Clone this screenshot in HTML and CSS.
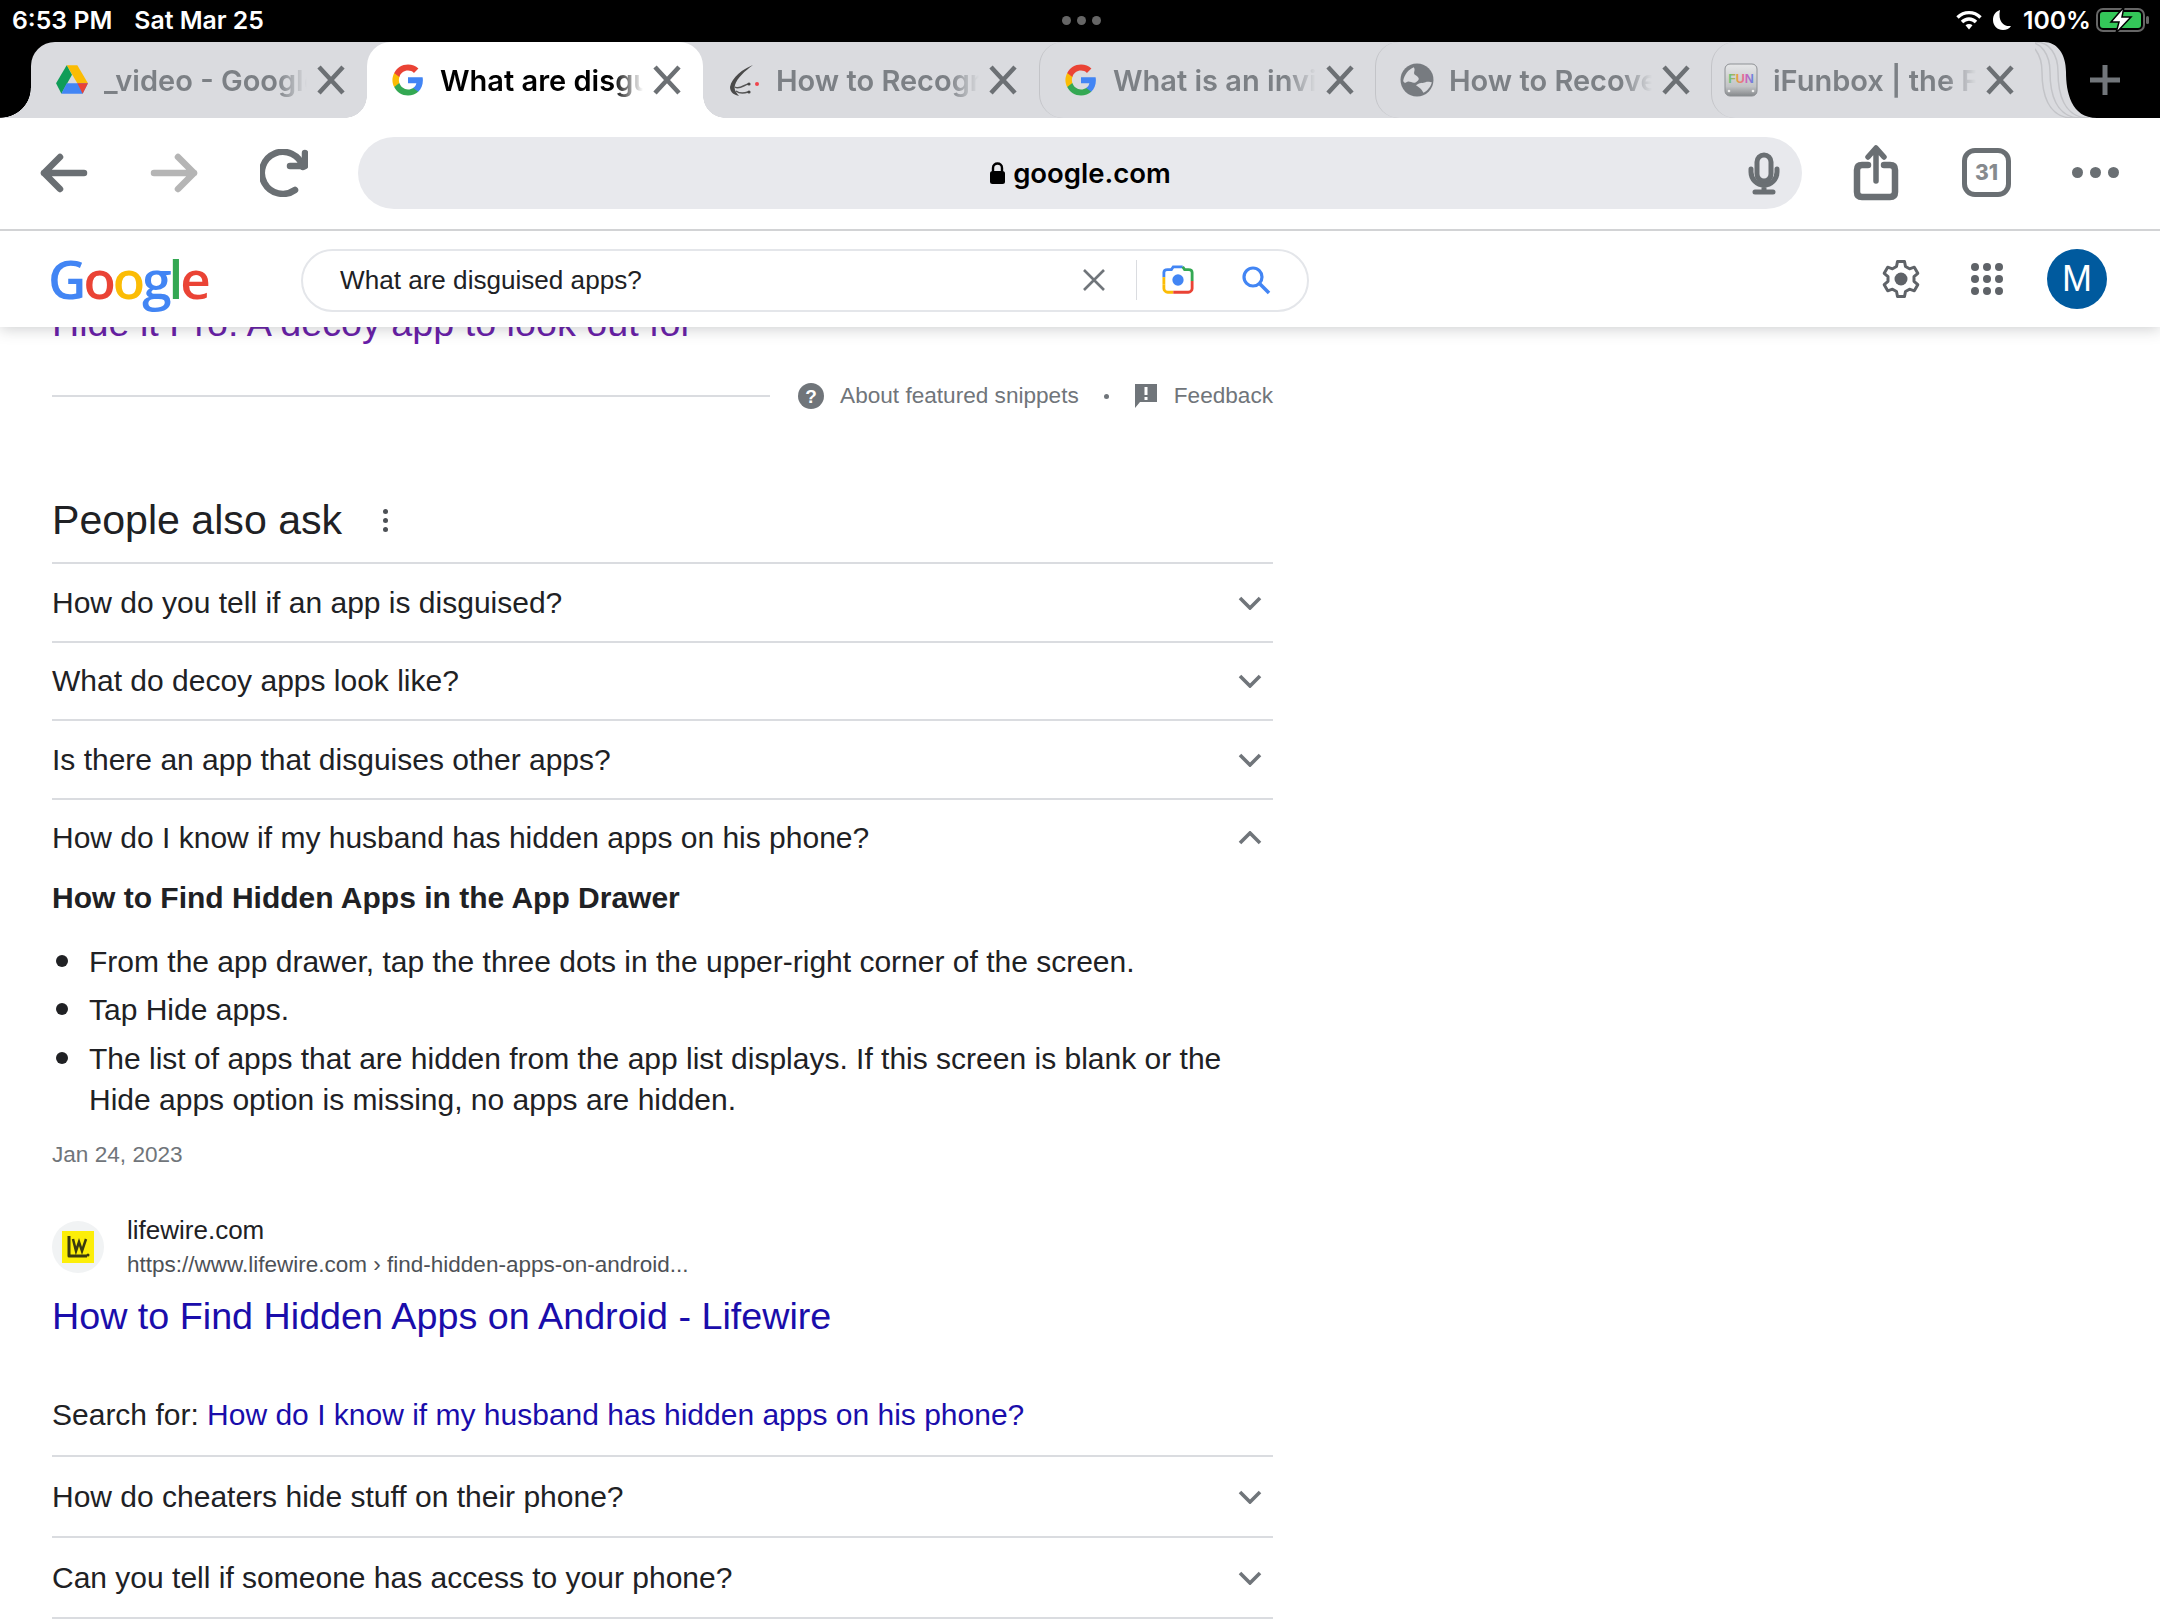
FILE: index.html
```html
<!DOCTYPE html>
<html>
<head>
    <meta charset="utf-8">
    <title>What are disguised apps? - Google Search</title>
    <link rel="stylesheet" href="styles.css">
</head>
<body>
<div id="chrome">
    <div class="statusbar">
        <div class="status-time"><span>6:53 PM</span><span>Sat Mar 25</span></div>
        <div class="status-dots"><i></i><i></i><i></i></div>
        <div class="status-right">
            <svg class="wifi" width="26" height="20" viewBox="0 0 26 20"><path d="M1.500 7.500C8 1 18 1 24.500 7.500" fill="none" stroke="#fff" stroke-width="3.400"/><path d="M6 12C10 8 16 8 20 12" fill="none" stroke="#fff" stroke-width="3.400"/><path d="M9.500 15.200C11.500 13.600 14.500 13.600 16.500 15.200L13 19.500Z" fill="#fff"/></svg>
            <svg class="moon" width="20" height="22" viewBox="0 0 20 22"><path d="M8 1C3.500 2.500 1 6 1 11C1 17 5.500 21 11 21C14.500 21 17.500 19.500 19 17C12.500 18 5.500 13 8 1Z" fill="#fff"/></svg>
            <span class="status-pct">100%</span>
            <svg width="54" height="26" viewBox="0 0 54 26"><rect x="1" y="2" width="47" height="22" rx="6" fill="none" stroke="#666" stroke-width="2"/><rect x="4" y="5" width="41" height="16" rx="3" fill="#34c759"/><rect x="50" y="9" width="3" height="8" rx="1.500" fill="#666"/><path d="M28 0L15 15H23L20 26L35 10H26Z" fill="#fff" stroke="#000" stroke-width="1.500"/></svg>
        </div>
    </div>

    <div class="tabstrip">
        <div class="tabs">
            <div class="tab">
                <svg class="favicon" viewBox="0 0 32 30"><path d="M11 1H21L31 18H21Z" fill="#fbbc04"/><path d="M11 1L1 18L6 28L16 10Z" fill="#0f9d58"/><path d="M6 28H26L31 18H11Z" fill="#4285f4"/><path d="M26 28L31 18H21Z" fill="#ea4335"/></svg>
                <span class="tab-title">_video - Google</span>
                <svg class="tab-close" viewBox="0 0 30 30"><path d="M3 2L27 28M27 2L3 28"/></svg>
            </div>
            <div class="tab active">
                <svg class="favicon" viewBox="0 0 48 48"><path fill="#4285f4" d="M45 24.500c0-1.600-.1-3.100-.4-4.500H24v8.500h11.800c-.5 2.700-2.100 5-4.400 6.600v5.500h7.100C42.600 36.800 45 31.200 45 24.500z"/><path fill="#34a853" d="M24 46c5.900 0 10.900-2 14.500-5.300l-7.100-5.500c-2 1.300-4.500 2.100-7.400 2.100-5.700 0-10.500-3.800-12.200-9H4.500v5.700C8.100 41.100 15.500 46 24 46z"/><path fill="#fbbc05" d="M11.800 28.300c-.4-1.300-.7-2.800-.7-4.300s.3-3 .7-4.300v-5.700H4.500C3 17 2 20.400 2 24s1 7 2.500 10z"/><path fill="#ea4335" d="M24 10.700c3.200 0 6.100 1.100 8.400 3.300l6.300-6.300C34.900 4.200 29.900 2 24 2 15.500 2 8.100 6.900 4.500 14l7.300 5.700c1.700-5.200 6.500-9 12.200-9z"/></svg>
                <span class="tab-title">What are disguised</span>
                <svg class="tab-close" viewBox="0 0 30 30"><path d="M3 2L27 28M27 2L3 28"/></svg>
            </div>
            <div class="tab">
                <svg class="favicon" viewBox="0 0 34 34"><path d="M26 2C16 6 5 14 3 24C3 30 8 32 12 33C8 28 7 26 8 22C10 15 18 8 26 2Z" fill="#4a4a4a"/><path d="M8 24C12 27 17 22 21 21M9 28C13 31 18 30 21 29" fill="none" stroke="#555" stroke-width="1.500"/><circle cx="22" cy="21" r="1.600" fill="#444"/><circle cx="22" cy="29" r="1.600" fill="#444"/><circle cx="30" cy="21" r="2" fill="#f0444c"/></svg>
                <span class="tab-title">How to Recognize</span>
                <svg class="tab-close" viewBox="0 0 30 30"><path d="M3 2L27 28M27 2L3 28"/></svg>
            </div>
            <div class="tab edged">
                <svg class="favicon" viewBox="0 0 48 48"><path fill="#4285f4" d="M45 24.500c0-1.600-.1-3.100-.4-4.500H24v8.500h11.800c-.5 2.700-2.100 5-4.400 6.600v5.500h7.100C42.600 36.800 45 31.200 45 24.500z"/><path fill="#34a853" d="M24 46c5.900 0 10.900-2 14.500-5.300l-7.100-5.500c-2 1.300-4.500 2.100-7.400 2.100-5.700 0-10.500-3.800-12.200-9H4.500v5.700C8.100 41.100 15.500 46 24 46z"/><path fill="#fbbc05" d="M11.800 28.300c-.4-1.300-.7-2.800-.7-4.300s.3-3 .7-4.300v-5.700H4.500C3 17 2 20.400 2 24s1 7 2.500 10z"/><path fill="#ea4335" d="M24 10.700c3.200 0 6.100 1.100 8.400 3.300l6.300-6.300C34.900 4.200 29.900 2 24 2 15.500 2 8.100 6.900 4.500 14l7.300 5.700c1.700-5.200 6.500-9 12.200-9z"/></svg>
                <span class="tab-title">What is an invisible</span>
                <svg class="tab-close" viewBox="0 0 30 30"><path d="M3 2L27 28M27 2L3 28"/></svg>
            </div>
            <div class="tab edged">
                <svg class="favicon" viewBox="0 0 32 32"><circle cx="16" cy="16" r="15.500" fill="#777b80"/><path d="M3 17C4 11 8 6 13 4C15 7 12 9 14 11C17 13 20 15 15 18C12 20 9 16 6 18C5 19 4 19 3 17Z" fill="#dadbdf"/><path d="M15 21C18 18 22 19 24 18C26 17 29 18 30 18C29 22 26 26 22 28C20 24 18 23 15 21Z" fill="#dadbdf"/></svg>
                <span class="tab-title">How to Recover</span>
                <svg class="tab-close" viewBox="0 0 30 30"><path d="M3 2L27 28M27 2L3 28"/></svg>
            </div>
            <div class="tab edged short">
                <svg class="favicon" viewBox="0 0 34 34">
                    <defs>
                        <linearGradient id="disk" x1="0" y1="0" x2="0" y2="1"><stop offset="0" stop-color="#e6e7e8"/><stop offset="0.700" stop-color="#c2c4c6"/><stop offset="1" stop-color="#85888b"/></linearGradient>
                        <linearGradient id="rainbow" x1="0" y1="0" x2="1" y2="0"><stop offset="0" stop-color="#49c98a"/><stop offset="0.350" stop-color="#e8a23c"/><stop offset="0.650" stop-color="#e65bb0"/><stop offset="1" stop-color="#5a86e8"/></linearGradient>
                    </defs>
                    <rect x="1" y="1" width="32" height="32" rx="5" fill="url(#disk)" stroke="#8d9094"/>
                    <text x="17" y="20" font-size="12.500" font-weight="700" text-anchor="middle" font-family="Liberation Sans" fill="url(#rainbow)">FUN</text>
                    <circle cx="5" cy="28" r="1.300" fill="#eee"/><circle cx="29" cy="28" r="1.300" fill="#eee"/>
                </svg>
                <span class="tab-title">iFunbox | the File</span>
                <svg class="tab-close" viewBox="0 0 30 30"><path d="M3 2L27 28M27 2L3 28"/></svg>
            </div>
            <svg class="tab-stack" width="62" height="76" viewBox="0 0 62 76">
                <path d="M0 0H9C22 0 31 12 31 30C31 50 36 76 62 76H0Z" fill="#dadbdf"/>
                <g fill="none" stroke="#c3c4c8" stroke-width="1.500">
                    <path d="M-7 0H1C14 0 23 12 23 30C23 50 28 76 54 76"/>
                    <path d="M-15 0H-7C6 0 15 12 15 30C15 50 20 76 46 76"/>
                    <path d="M-23 0H-15C-2 0 7 12 7 30C7 50 12 76 38 76"/>
                </g>
            </svg>
        </div>
        <svg class="tab-new" width="32" height="32" viewBox="0 0 32 32"><path d="M16 1V31M1 16H31"/></svg>
    </div>

    <div class="toolbar">
        <svg class="tool" width="48" height="40" viewBox="0 0 48 40"><path d="M20 4L4 20L20 36M4 20H44" class="line"/></svg>
        <svg class="tool faded" width="48" height="40" viewBox="0 0 48 40"><path d="M28 4L44 20L28 36M44 20H4" class="line"/></svg>
        <svg class="tool" width="48" height="48" viewBox="0 0 48 48"><path d="M43 18A21 21 0 1 0 35 41" class="line"/><path d="M45 4V17H30" class="line"/></svg>
        <div class="urlbar">
            <div class="url">
                <svg width="17" height="24" viewBox="0 0 17 24"><path d="M4 10V7C4 1 13 1 13 7V10" fill="none" stroke="#000" stroke-width="2.400"/><rect x="1" y="10" width="15" height="13" rx="2.500" fill="#000"/></svg>
                <span>google.com</span>
            </div>
            <svg class="mic" width="32" height="44" viewBox="0 0 32 44"><rect x="9" y="4" width="14" height="26" rx="7" class="line-thin"/><path d="M3 18V21A13 13 0 0 0 29 21V18M16 34V41M7 41H25" class="line-thin"/></svg>
        </div>
        <svg class="tool share" width="50" height="56" viewBox="0 0 50 56"><path d="M17 20H11Q6 20 6 25V47Q6 52 11 52H39Q44 52 44 47V25Q44 20 39 20H33" class="line"/><path d="M25 36V4M17 12L25 3L33 12" class="line-share"/></svg>
        <div class="tabcount">31</div>
        <div class="more"><i></i><i></i><i></i></div>
    </div>

    <div class="searchbar">
        <div class="logo"><span class="b">G</span><span class="r">o</span><span class="y">o</span><span class="b">g</span><span class="g">l</span><span class="r">e</span></div>
        <div class="searchbox">
            <span class="query">What are disguised apps?</span>
            <svg class="clear-x" width="24" height="24" viewBox="0 0 24 24"><path d="M2 2L22 22M22 2L2 22" fill="none" stroke="#70757a" stroke-width="2.600"/></svg>
            <span class="divider"></span>
            <svg class="lens" width="32" height="30" viewBox="0 0 34 30"><path d="M2 12V7C2 5 4 4 6 4H10L12 1H22" fill="none" stroke="#4285f4" stroke-width="3"/><path d="M22 1L24 4H28C30 4 32 5 32 7V16" fill="none" stroke="#34a853" stroke-width="3"/><path d="M2 12V20" fill="none" stroke="#fbbc05" stroke-width="3"/><path d="M2 20V24C2 26 4 28 6 28H12" fill="none" stroke="#fbbc05" stroke-width="3"/><path d="M12 28H28C30 28 32 26 32 24V16" fill="none" stroke="#ea4335" stroke-width="3"/><circle cx="17" cy="15" r="6" fill="#4285f4"/></svg>
            <svg width="30" height="30" viewBox="0 0 30 30"><circle cx="12" cy="12" r="9" fill="none" stroke="#4285f4" stroke-width="3.200"/><path d="M18.500 18.500L28 28" stroke="#4285f4" stroke-width="3.600"/></svg>
        </div>
        <div class="search-right">
            <svg width="40" height="40" viewBox="0 0 40 40"><path d="M16.500 2.500H23.500L24.500 7.500L28.500 9.800L33.300 8.200L36.800 14.300L33 17.700V22.300L36.800 25.700L33.300 31.800L28.500 30.200L24.500 32.500L23.500 37.500H16.500L15.500 32.500L11.500 30.200L6.700 31.800L3.200 25.700L7 22.300V17.700L3.200 14.300L6.700 8.200L11.500 9.800L15.500 7.500Z" fill="none" stroke="#5f6368" stroke-width="3" stroke-linejoin="round"/><circle cx="20" cy="20" r="6.500" fill="#5f6368"/></svg>
            <div class="apps"><i></i><i></i><i></i><i></i><i></i><i></i><i></i><i></i><i></i></div>
            <div class="avatar">M</div>
        </div>
    </div>
</div>

<div id="main">
    <a class="visited-link">Hide it Pro: A decoy app to look out for</a>

    <div class="snippet-foot">
        <div class="foot-line"></div>
        <svg width="26" height="26" viewBox="0 0 26 26"><circle cx="13" cy="13" r="13" fill="#70757a"/><text x="13" y="20" font-size="19" font-weight="700" text-anchor="middle" font-family="Liberation Sans" fill="#fff">?</text></svg>
        <span class="foot-about">About featured snippets</span>
        <span class="foot-dot"></span>
        <svg width="24" height="26" viewBox="0 0 24 26"><path d="M1 1H23V19H6L1 25Z" fill="#70757a"/><path d="M12 4V12M12 14V17" stroke="#fff" stroke-width="3"/></svg>
        <span>Feedback</span>
    </div>

    <div class="paa-head">
        <h2>People also ask</h2>
        <div class="paa-menu"><i></i><i></i><i></i></div>
    </div>

    <div class="question"><span>How do you tell if an app is disguised?</span><svg class="chev" viewBox="0 0 24 14"><path d="M2 2L12 12L22 2"/></svg></div>
    <div class="question"><span>What do decoy apps look like?</span><svg class="chev" viewBox="0 0 24 14"><path d="M2 2L12 12L22 2"/></svg></div>
    <div class="question"><span>Is there an app that disguises other apps?</span><svg class="chev" viewBox="0 0 24 14"><path d="M2 2L12 12L22 2"/></svg></div>
    <div class="question open"><span>How do I know if my husband has hidden apps on his phone?</span><svg class="chev" viewBox="0 0 24 14"><path d="M2 12L12 2L22 12"/></svg></div>

    <div class="answer">
        <div class="answer-title">How to Find Hidden Apps in the App Drawer</div>
        <ul>
            <li><span>From the app drawer, tap the three dots in the upper-right corner of the screen.</span></li>
            <li><span>Tap Hide apps.</span></li>
            <li><span>The list of apps that are hidden from the app list displays. If this screen is blank or the Hide apps option is missing, no apps are hidden.</span></li>
        </ul>
        <div class="date">Jan 24, 2023</div>
        <div class="source">
            <div class="source-icon">
                <svg width="32" height="32" viewBox="0 0 32 32"><rect width="32" height="32" fill="#fcee09"/><path d="M7 5V25H25" fill="none" stroke="#3a3a10" stroke-width="3" stroke-linejoin="round"/><path d="M11 8L14 20L17 11L20 20L24 8" fill="none" stroke="#3a3a10" stroke-width="2.500"/><circle cx="26" cy="24" r="1.500" fill="#3a3a10"/></svg>
            </div>
            <div>
                <div class="source-name">lifewire.com</div>
                <div class="source-url">https://www.lifewire.com › find-hidden-apps-on-android...</div>
            </div>
        </div>
        <a class="result-title">How to Find Hidden Apps on Android - Lifewire</a>
        <div class="search-for">Search for: <a>How do I know if my husband has hidden apps on his phone?</a></div>
    </div>

    <div class="question tall"><span>How do cheaters hide stuff on their phone?</span><svg class="chev" viewBox="0 0 24 14"><path d="M2 2L12 12L22 2"/></svg></div>
    <div class="question tall"><span>Can you tell if someone has access to your phone?</span><svg class="chev" viewBox="0 0 24 14"><path d="M2 2L12 12L22 2"/></svg></div>
    <div class="last-line"></div>
</div>
</body>
</html>
```

FILE: styles.css
```css
html, body {
    margin: 0;
    height: 1620px;
    overflow: hidden;
    background: white;
    font-family: "Liberation Sans", Arial, sans-serif;
}

/* browser chrome */
#chrome {
    position: relative;
    z-index: 2;
    background: white;
    box-shadow: 0 2px 14px rgba(60, 64, 67, 0.25);
    font-family: Inter, "Liberation Sans", sans-serif;
}

.statusbar {
    height: 42px;
    box-sizing: border-box;
    background: black;
    color: white;
    display: flex;
    align-items: center;
    justify-content: space-between;
    padding: 0 10px 2px 12px;
    font-size: 24.800px;
    font-weight: 600;
}

.status-time {
    width: 400px;
    display: flex;
    gap: 22px;
}

.status-dots {
    display: flex;
    gap: 6px;
}

.status-dots i {
    width: 9px;
    height: 9px;
    border-radius: 50%;
    background: #666;
}

.status-right {
    width: 400px;
    display: flex;
    justify-content: flex-end;
    align-items: center;
    gap: 5px;
}

.wifi {
    margin-right: 5px;
}

.moon {
    margin-right: 6px;
}

.tabstrip {
    height: 76px;
    background: black;
    display: flex;
    padding-left: 31px;
}

.tabs {
    position: relative;
    display: flex;
    background: linear-gradient(#dadbdf, #dadbdf) no-repeat 0 0 / calc(100% - 62px) 100%;
    border-top-left-radius: 24px;
}

.tabs::before {
    content: "";
    position: absolute;
    left: -31px;
    bottom: 0;
    width: 31px;
    height: 30px;
    background: radial-gradient(ellipse 31px 30px at 0 0, transparent 98%, #dadbdf 100%);
}

.tab {
    width: 336px;
    box-sizing: border-box;
    position: relative;
    display: flex;
    align-items: center;
    padding-left: 24px;
    color: #7c8085;
    border-radius: 24px;
    font-size: 29px;
    font-weight: 600;
}

.tab.edged {
    border-left: 1.5px solid #c3c4c8;
}

.tab.short {
    width: 324px;
    padding-left: 12px;
}

.tab.active {
    background: white;
    color: black;
    border-radius: 24px 24px 0 0;
}

.tab.active::before,
.tab.active::after {
    content: "";
    position: absolute;
    bottom: 0;
    width: 22px;
    height: 22px;
}

.tab.active::before {
    left: -22px;
    background: radial-gradient(circle 22px at 0 0, transparent 98%, white 100%);
}

.tab.active::after {
    right: -22px;
    background: radial-gradient(circle 22px at 100% 0, transparent 98%, white 100%);
}

.favicon {
    width: 34px;
    height: 34px;
    flex: none;
}

.tab-title {
    margin-left: 15px;
    width: 203px;
    flex: none;
    white-space: nowrap;
    overflow: hidden;
    -webkit-mask-image: linear-gradient(to right, black 85%, transparent 100%);
    mask-image: linear-gradient(to right, black 85%, transparent 100%);
}

.tab-close {
    width: 30px;
    height: 30px;
    margin-left: 9px;
    flex: none;
    fill: none;
    stroke: #6c7074;
    stroke-width: 4.500;
}

.tab-stack {
    flex: none;
}

.tab-new {
    margin: 22px 0 0 -8px;
    fill: none;
    stroke: #72767b;
    stroke-width: 5;
}

.toolbar {
    height: 113px;
    box-sizing: border-box;
    border-bottom: 2px solid #d2d3d5;
    display: flex;
    align-items: center;
    padding: 0 0 2px 40px;
}

.line, .line-thin, .line-share {
    fill: none;
    stroke: #6a6f73;
    stroke-linecap: round;
    stroke-linejoin: round;
}

.line {
    stroke-width: 6.500;
}

.line-share {
    stroke-width: 5.500;
}

.line-thin {
    stroke-width: 5;
}

.tool {
    flex: none;
    margin-right: 62px;
}

.tool.faded .line {
    stroke: #b5b5b5;
}

.urlbar {
    flex: none;
    width: 1444px;
    height: 72px;
    margin: 0 49px 0 -12px;
    background: #e8e9ed;
    border-radius: 36px;
    position: relative;
    display: flex;
    align-items: center;
    justify-content: center;
}

.url {
    display: flex;
    align-items: center;
    gap: 7px;
    font-size: 27.500px;
    font-weight: 600;
    color: black;
}

.mic {
    position: absolute;
    right: 22px;
    top: 14px;
}

.tool.share {
    margin-right: 0;
}

.tabcount {
    width: 49px;
    height: 49px;
    box-sizing: border-box;
    margin-left: 61px;
    border: 5px solid #6a6f73;
    border-radius: 13px;
    color: #868a8e;
    display: flex;
    align-items: center;
    justify-content: center;
    font-size: 21px;
    font-weight: 800;
}

.more {
    display: flex;
    gap: 7px;
    margin-left: 61px;
}

.more i {
    width: 11px;
    height: 11px;
    border-radius: 50%;
    background: #6a6f73;
}

.searchbar {
    height: 96px;
    display: flex;
    align-items: center;
    padding-left: 48px;
    font-family: "Liberation Sans", Arial, sans-serif;
}

.logo {
    width: 253px;
    font-family: "Open Sans", sans-serif;
    font-size: 53px;
    font-weight: 600;
    letter-spacing: -3px;
    line-height: 58px;
}

.logo .b { color: #4285f4; }
.logo .r { color: #ea4335; }
.logo .y { color: #fbbc05; }
.logo .g { color: #34a853; }

.searchbox {
    width: 1008px;
    height: 63px;
    box-sizing: border-box;
    margin-top: 2px;
    border: 2px solid #e4e6ea;
    border-radius: 32px;
    display: flex;
    align-items: center;
    padding: 0 36px 0 37px;
    gap: 27px;
}

.query {
    flex: 1;
    font-size: 26.100px;
    color: #202124;
}

.clear-x {
    margin-right: 3px;
}

.lens {
    margin: 0 20px 0 -2px;
}

.divider {
    width: 1px;
    height: 40px;
    background: #dadce0;
}

.search-right {
    margin-left: 572px;
    display: flex;
    align-items: center;
}

.apps {
    margin-left: 50px;
    display: grid;
    grid-template-columns: repeat(3, 8px);
    gap: 4px;
}

.apps i {
    width: 8px;
    height: 8px;
    border-radius: 50%;
    background: #5f6368;
}

.avatar {
    width: 60px;
    height: 60px;
    margin-left: 44px;
    background: #005a9e;
    border-radius: 50%;
    color: white;
    font-size: 36px;
    display: flex;
    align-items: center;
    justify-content: center;
}

/* results */
#main {
    width: 1221px;
    margin: -25px 0 0 52px;
    color: #202124;
    font-size: 30px;
}

.visited-link {
    display: block;
    height: 42px;
    line-height: 42px;
    font-size: 37.700px;
    color: #681da8;
}

.snippet-foot {
    display: flex;
    align-items: center;
    height: 40px;
    margin-top: 32px;
    color: #70757a;
    font-size: 22.600px;
}

.foot-line {
    flex: 1;
    height: 2px;
    background: #dadce0;
    margin-right: 28px;
}

.foot-about {
    margin-left: 16px;
}

.foot-dot {
    width: 5px;
    height: 5px;
    border-radius: 50%;
    background: #70757a;
    margin: 0 25px;
}

.snippet-foot span:last-child {
    margin-left: 16px;
}

.paa-head {
    display: flex;
    align-items: center;
    height: 84px;
    margin-top: 62px;
    padding-top: 1px;
    box-sizing: border-box;
}

h2 {
    margin: 0;
    font-size: 41.100px;
    font-weight: 400;
}

.paa-menu {
    margin-left: 41px;
    display: flex;
    flex-direction: column;
    gap: 4px;
}

.paa-menu i {
    width: 5px;
    height: 5px;
    border-radius: 50%;
    background: #4d5156;
}

.question {
    height: 78.500px;
    box-sizing: border-box;
    border-top: 2px solid #dadce0;
    display: flex;
    align-items: center;
    justify-content: space-between;
    padding: 1px 11px 0 0;
}

.question.tall {
    height: 81px;
}

.question.open {
    height: 78px;
}

.chev {
    width: 24px;
    height: 14px;
    fill: none;
    stroke: #70757a;
    stroke-width: 3.600;
}

.answer-title {
    font-weight: 700;
    line-height: 40px;
    margin-top: 2px;
}

ul {
    margin: 23px 0 0;
    padding: 0 0 0 4px;
    list-style: none;
    line-height: 41px;
}

li {
    display: flex;
    margin-bottom: 7.500px;
}

li::before {
    content: "";
    flex: none;
    width: 12px;
    height: 12px;
    margin: 14px 21px 0 0;
    border-radius: 50%;
    background: #202124;
}

.date {
    margin-top: 18px;
    color: #70757a;
    font-size: 22.600px;
    line-height: 34px;
}

.source {
    display: flex;
    align-items: center;
    gap: 23px;
    margin-top: 41px;
}

.source-icon {
    width: 52px;
    height: 52px;
    background: #f1f3f4;
    border-radius: 50%;
    display: flex;
    align-items: center;
    justify-content: center;
}

.source-name {
    font-size: 26px;
    line-height: 34px;
}

.source-url {
    font-size: 22.500px;
    line-height: 34px;
    margin-top: 1px;
    color: #4d5156;
}

.result-title {
    display: block;
    margin-top: 9px;
    font-size: 37.700px;
    line-height: 50px;
    color: #1a0dab;
}

.search-for {
    margin-top: 54px;
    line-height: 40px;
    margin-bottom: 20px;
}

.search-for a {
    color: #1a0dab;
}

.last-line {
    height: 2px;
    background: #dadce0;
}
```
